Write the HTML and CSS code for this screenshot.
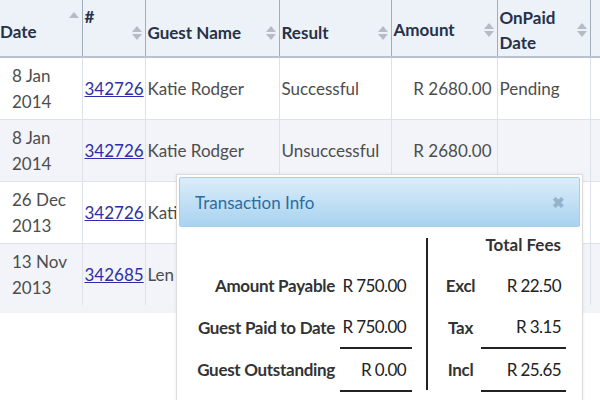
FILE: index.html
```html
<!DOCTYPE html>
<html lang="en">
<head>
    <meta charset="UTF-8">
    <title>Payments</title>
    <link rel="stylesheet" href="styles.css">
</head>
<body>
    <table class="grid">
        <colgroup>
            <col style="width:82px">
            <col style="width:63px">
            <col style="width:134px">
            <col style="width:112px">
            <col style="width:106px">
            <col style="width:93px">
            <col>
        </colgroup>
        <thead>
            <tr>
                <th class="th-date"><div class="th-in"><span>Date</span><span class="sort up-only"></span></div></th>
                <th class="th-top"><div class="th-in"><span class="th-text">#</span><span class="sort"></span></div></th>
                <th><div class="th-in"><span>Guest Name</span><span class="sort"></span></div></th>
                <th><div class="th-in"><span>Result</span><span class="sort"></span></div></th>
                <th class="th-high"><div class="th-in"><span>Amount</span><span class="sort"></span></div></th>
                <th class="th-high"><div class="th-in"><span>OnPaid<br>Date</span><span class="sort"></span></div></th>
                <th></th>
            </tr>
        </thead>
        <tbody>
            <tr>
                <td class="date">8 Jan<br>2014</td>
                <td><a href="#">342726</a></td>
                <td>Katie Rodger</td>
                <td>Successful</td>
                <td class="num">R 2680.00</td>
                <td>Pending</td>
                <td></td>
            </tr>
            <tr>
                <td class="date">8 Jan<br>2014</td>
                <td><a href="#">342726</a></td>
                <td>Katie Rodger</td>
                <td>Unsuccessful</td>
                <td class="num">R 2680.00</td>
                <td></td>
                <td></td>
            </tr>
            <tr>
                <td class="date">26 Dec<br>2013</td>
                <td><a href="#">342726</a></td>
                <td>Kati</td>
                <td></td>
                <td></td>
                <td></td>
                <td></td>
            </tr>
            <tr>
                <td class="date">13 Nov<br>2013</td>
                <td><a href="#">342685</a></td>
                <td>Len</td>
                <td></td>
                <td></td>
                <td></td>
                <td></td>
            </tr>
        </tbody>
    </table>

    <div class="dialog">
        <div class="dialog-bar">
            <span class="dialog-title">Transaction Info</span>
            <span class="dialog-close">&#x2716;</span>
        </div>
        <div class="dialog-body">
            <div class="summary">
                <table class="sheet">
                    <tr><td class="lbl"></td><td class="val"></td></tr>
                    <tr><td class="lbl">Amount Payable</td><td class="val">R 750.00</td></tr>
                    <tr><td class="lbl">Guest Paid to Date</td><td class="val line">R 750.00</td></tr>
                    <tr><td class="lbl">Guest Outstanding</td><td class="val line">R 0.00</td></tr>
                </table>
            </div>
            <div class="divider"></div>
            <div class="fees">
                <table class="sheet">
                    <tr><td colspan="2" class="fees-head">Total Fees</td></tr>
                    <tr><td class="flbl">Excl</td><td class="fval">R 22.50</td></tr>
                    <tr><td class="flbl">Tax</td><td class="fval line">R 3.15</td></tr>
                    <tr><td class="flbl">Incl</td><td class="fval line">R 25.65</td></tr>
                </table>
            </div>
        </div>
    </div>
</body>
</html>
```

FILE: styles.css
```css
body {
    margin: 0;
    font-family: 'Lato', 'Open Sans', sans-serif;
    font-size: 17px;
    color: #4d4d4d;
    background: #fff;
}
.grid {
    width: 620px;
    table-layout: fixed;
    border-collapse: collapse;
    border-bottom: 8px solid #f1f3f7;
}
.grid th {
    height: 56px;
    padding: 0 2px;
    background: #edf1f8;
    border-right: 1px solid #a3adbd;
    border-bottom: 2px solid #b9c2cf;
    color: #263248;
    font-weight: bold;
    text-align: left;
    vertical-align: top;
    line-height: 25px;
}
.grid th.th-date {
    padding-left: 0;
}
.th-in {
    display: flex;
    align-items: center;
    justify-content: space-between;
    height: 56px;
    padding-top: 9px;
    box-sizing: border-box;
}
.th-high .th-in {
    padding-top: 3px;
}
.th-date .th-in {
    padding-top: 6px;
}
.th-date .sort {
    align-self: flex-start;
    margin-top: 6px;
}
.th-top .th-text {
    align-self: flex-start;
    margin-top: -5px;
}
.sort {
    display: flex;
    flex-direction: column;
    align-items: center;
    gap: 2px;
    width: 12px;
}
.sort::before,
.sort::after {
    content: "";
    border-left: 5px solid transparent;
    border-right: 5px solid transparent;
}
.sort::before {
    border-bottom: 6px solid #b5bcc6;
}
.sort::after {
    border-top: 6px solid #b5bcc6;
}
.sort.up-only::after {
    display: none;
}
.grid td {
    height: 61px;
    padding: 0 2px;
    border-right: 1px solid #dde2ea;
    border-bottom: 1px solid #dde2ea;
    line-height: 26px;
    white-space: nowrap;
    overflow: hidden;
}
.grid tbody tr:nth-child(even) td {
    background: #f2f4f9;
}
.grid td.date {
    padding-left: 12px;
}
.grid td.num {
    text-align: right;
    padding-right: 5px;
}
.grid a {
    color: #2e2ea6;
}

.dialog {
    position: absolute;
    left: 176px;
    top: 174px;
    width: 405px;
    height: 240px;
    background: #fff;
    border: 1px solid #dcdcdc;
    box-shadow: 0 0 3px rgba(0, 0, 0, 0.08);
}
.dialog-bar {
    display: flex;
    align-items: center;
    justify-content: space-between;
    height: 48px;
    margin: 2px 2px 0;
    padding: 0 14px 0 15px;
    background: linear-gradient(#dcedf9, #a8d2f0);
    border: 1px solid #a9cde9;
    border-radius: 2px;
}
.dialog-title {
    color: #2d6c9f;
    font-size: 17px;
}
.dialog-close {
    color: #93b3cb;
    font-size: 15px;
    font-weight: bold;
}
.dialog-body {
    display: flex;
    align-items: flex-start;
    color: #222;
}
.summary {
    width: 249px;
    display: flex;
    justify-content: flex-end;
}
.sheet {
    border-collapse: collapse;
    margin-top: -3px;
}
.sheet td {
    height: 41px;
    padding: 0;
    white-space: nowrap;
}
.summary .sheet {
    margin-right: 14px;
}
.lbl {
    text-align: right;
    padding-right: 5px !important;
    font-weight: bold;
    color: #333;
    letter-spacing: -0.3px;
}
.val {
    width: 66px;
    text-align: right;
    padding-right: 6px !important;
    letter-spacing: -0.6px;
}
.line {
    border-bottom: 2px solid #222;
}
.divider {
    width: 2px;
    height: 152px;
    margin-top: 11px;
    background: #222;
}
.fees .sheet {
    margin-left: 12px;
}
.fees-head {
    text-align: right;
    padding-right: 5px !important;
    font-weight: bold;
    color: #333;
}
.flbl {
    width: 41px;
    text-align: center;
    font-weight: bold;
    color: #333;
    letter-spacing: -0.3px;
}
.fval {
    width: 80px;
    text-align: right;
    padding-right: 5px !important;
    letter-spacing: -0.6px;
}
```
